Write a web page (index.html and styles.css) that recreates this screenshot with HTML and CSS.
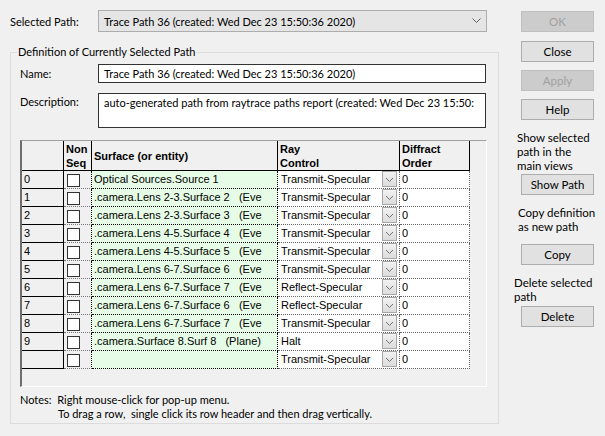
FILE: index.html
```html
<!DOCTYPE html>
<html>
<head>
<meta charset="utf-8">
<link rel="stylesheet" href="styles.css">
</head>
<body>
<div class="dialog">
  <div class="main">
    <div class="sel-row">
      <span class="sel-lbl">Selected Path:</span>
      <div class="combo">
        <span>Trace Path 36 (created: Wed Dec 23 15:50:36 2020)</span>
        <svg class="chev" width="9" height="6" viewBox="0 0 9 6"><polyline points="0.5,0.5 4.5,4.5 8.5,0.5" fill="none" stroke="#606060" stroke-width="1"/></svg>
      </div>
    </div>
    <fieldset class="group">
      <legend>Definition of Currently Selected Path</legend>
      <div class="field-row name-row">
        <span class="lbl">Name:</span>
        <div class="edit name-edit">Trace Path 36 (created: Wed Dec 23 15:50:36 2020)</div>
      </div>
      <div class="field-row desc-row">
        <span class="lbl">Description:</span>
        <div class="edit desc-edit">auto-generated path from raytrace paths report (created: Wed Dec 23 15:50:</div>
      </div>
      <div class="grid-wrap">
        <div class="grid">
          <div class="hc hc-rh"></div>
          <div class="hc">Non<br>Seq</div>
          <div class="hc">Surface (or entity)</div>
          <div class="hc">Ray<br>Control</div>
          <div class="hc">Diffract<br>Order</div>

          <div class="rh">0</div><div class="ns"><span class="cb"></span></div><div class="sf">Optical Sources.Source 1</div><div class="rc"><span>Transmit-Specular</span><span class="dd"><svg width="9" height="6" viewBox="0 0 9 6"><polyline points="1,1 4.5,4.5 8,1" fill="none" stroke="#707070"/></svg></span></div><div class="df">0</div>
          <div class="rh">1</div><div class="ns"><span class="cb"></span></div><div class="sf">.camera.Lens 2-3.Surface 2&nbsp;&nbsp; (Eve</div><div class="rc"><span>Transmit-Specular</span><span class="dd"><svg width="9" height="6" viewBox="0 0 9 6"><polyline points="1,1 4.5,4.5 8,1" fill="none" stroke="#707070"/></svg></span></div><div class="df">0</div>
          <div class="rh">2</div><div class="ns"><span class="cb"></span></div><div class="sf">.camera.Lens 2-3.Surface 3&nbsp;&nbsp; (Eve</div><div class="rc"><span>Transmit-Specular</span><span class="dd"><svg width="9" height="6" viewBox="0 0 9 6"><polyline points="1,1 4.5,4.5 8,1" fill="none" stroke="#707070"/></svg></span></div><div class="df">0</div>
          <div class="rh">3</div><div class="ns"><span class="cb"></span></div><div class="sf">.camera.Lens 4-5.Surface 4&nbsp;&nbsp; (Eve</div><div class="rc"><span>Transmit-Specular</span><span class="dd"><svg width="9" height="6" viewBox="0 0 9 6"><polyline points="1,1 4.5,4.5 8,1" fill="none" stroke="#707070"/></svg></span></div><div class="df">0</div>
          <div class="rh">4</div><div class="ns"><span class="cb"></span></div><div class="sf">.camera.Lens 4-5.Surface 5&nbsp;&nbsp; (Eve</div><div class="rc"><span>Transmit-Specular</span><span class="dd"><svg width="9" height="6" viewBox="0 0 9 6"><polyline points="1,1 4.5,4.5 8,1" fill="none" stroke="#707070"/></svg></span></div><div class="df">0</div>
          <div class="rh">5</div><div class="ns"><span class="cb"></span></div><div class="sf">.camera.Lens 6-7.Surface 6&nbsp;&nbsp; (Eve</div><div class="rc"><span>Transmit-Specular</span><span class="dd"><svg width="9" height="6" viewBox="0 0 9 6"><polyline points="1,1 4.5,4.5 8,1" fill="none" stroke="#707070"/></svg></span></div><div class="df">0</div>
          <div class="rh">6</div><div class="ns"><span class="cb"></span></div><div class="sf">.camera.Lens 6-7.Surface 7&nbsp;&nbsp; (Eve</div><div class="rc"><span>Reflect-Specular</span><span class="dd"><svg width="9" height="6" viewBox="0 0 9 6"><polyline points="1,1 4.5,4.5 8,1" fill="none" stroke="#707070"/></svg></span></div><div class="df">0</div>
          <div class="rh">7</div><div class="ns"><span class="cb"></span></div><div class="sf">.camera.Lens 6-7.Surface 6&nbsp;&nbsp; (Eve</div><div class="rc"><span>Reflect-Specular</span><span class="dd"><svg width="9" height="6" viewBox="0 0 9 6"><polyline points="1,1 4.5,4.5 8,1" fill="none" stroke="#707070"/></svg></span></div><div class="df">0</div>
          <div class="rh">8</div><div class="ns"><span class="cb"></span></div><div class="sf">.camera.Lens 6-7.Surface 7&nbsp;&nbsp; (Eve</div><div class="rc"><span>Transmit-Specular</span><span class="dd"><svg width="9" height="6" viewBox="0 0 9 6"><polyline points="1,1 4.5,4.5 8,1" fill="none" stroke="#707070"/></svg></span></div><div class="df">0</div>
          <div class="rh">9</div><div class="ns"><span class="cb"></span></div><div class="sf">.camera.Surface 8.Surf 8&nbsp;&nbsp; (Plane)</div><div class="rc"><span>Halt</span><span class="dd"><svg width="9" height="6" viewBox="0 0 9 6"><polyline points="1,1 4.5,4.5 8,1" fill="none" stroke="#707070"/></svg></span></div><div class="df">0</div>
          <div class="rh"></div><div class="ns"><span class="cb"></span></div><div class="sf"></div><div class="rc"><span>Transmit-Specular</span><span class="dd"><svg width="9" height="6" viewBox="0 0 9 6"><polyline points="1,1 4.5,4.5 8,1" fill="none" stroke="#707070"/></svg></span></div><div class="df">0</div>
        </div>
      </div>
      <div class="notes">
        <div>Notes:&nbsp; Right mouse-click for pop-up menu.</div>
        <div class="indent">To drag a row,&nbsp; single click its row header and then drag vertically.</div>
      </div>
    </fieldset>
  </div>
  <div class="side">
    <div class="btn disabled b-ok">OK</div>
    <div class="btn b-close">Close</div>
    <div class="btn disabled b-apply">Apply</div>
    <div class="btn b-help">Help</div>
    <div class="stext t-show">Show selected<br>path in the<br>main views</div>
    <div class="btn b-show">Show Path</div>
    <div class="stext t-copy">Copy definition<br>as new path</div>
    <div class="btn b-copy">Copy</div>
    <div class="stext t-del">Delete selected<br>path</div>
    <div class="btn b-del">Delete</div>
  </div>
</div>
</body>
</html>
```

FILE: styles.css
```css
html, body {
  margin: 0;
  padding: 0;
  background: #f0f0f0;
}
body {
  font-family: "Lato", "Noto Sans", sans-serif;
  font-size: 11px;
  color: #000;
  width: 605px;
  height: 436px;
  overflow: hidden;
}
.dialog {
  display: flex;
  width: 605px;
  height: 436px;
}
.main {
  width: 489px;
  padding-left: 10px;
  padding-top: 10px;
}
.sel-row {
  display: flex;
  align-items: center;
  height: 22px;
}
.sel-lbl {
  width: 88px;
}
.combo {
  box-sizing: border-box;
  width: 389px;
  height: 22px;
  border: 1px solid #adadad;
  background: #e5e5e5;
  display: flex;
  align-items: center;
  justify-content: space-between;
  padding: 0 5px 0 5px;
}
.chev {
  display: block;
}
.group {
  box-sizing: border-box;
  margin: 12px 0 0 0;
  width: 489px;
  height: 380px;
  border: 1px solid #dcdcdc;
  padding: 0 0 0 9px;
  min-width: 0;
}
.group legend {
  padding: 0 1px;
  margin-left: -3px;
  line-height: 16px;
}
.field-row {
  display: flex;
}
.lbl {
  width: 78px;
  line-height: 16px;
}
.name-row {
  margin-top: 4px;
  align-items: center;
}
.edit {
  box-sizing: border-box;
  width: 388px;
  background: #fff;
  border: 1px solid #333;
  padding: 0 5px;
  line-height: 16px;
  white-space: nowrap;
  overflow: hidden;
}
.name-edit {
  height: 19px;
  padding-top: 1px;
}
.desc-row {
  margin-top: 10px;
}
.desc-row .lbl {
  padding-top: 1px;
}
.desc-edit {
  height: 35px;
  padding-top: 1px;
}
.grid-wrap {
  box-sizing: border-box;
  margin-top: 12px;
  width: 467px;
  height: 247px;
  border-top: 1px solid #a0a0a0;
  border-left: 2px solid #6e6e6e;
  border-right: 1px solid #fff;
  border-bottom: 1px solid #fff;
}
.grid {
  display: grid;
  grid-template-columns: 42px 28px 186px 122px 70px;
  grid-template-rows: 30px repeat(11, 18px);
  width: 448px;
  font-family: "Liberation Sans", Arial, sans-serif;
  font-size: 11px;
}
.grid > div {
  box-sizing: border-box;
  overflow: hidden;
  white-space: nowrap;
}
.hc {
  font-weight: bold;
  line-height: 14px;
  border-right: 1px solid #000;
  border-bottom: 1px solid #000;
  display: flex;
  align-items: center;
  padding-left: 2px;
  background: #f0f0f0;
}
.rh {
  border-right: 1px solid #000;
  border-bottom: 1px solid #000;
  padding: 1px 0 0 2px;
  line-height: 14px;
}
.ns {
  border-right: 1px dotted #000;
  border-bottom: 1px dotted #777;
  padding: 3px 0 0 3px;
}
.cb {
  display: block;
  box-sizing: border-box;
  width: 13px;
  height: 13px;
  border: 1px solid #333;
  background: #fff;
}
.sf {
  background: #e6fce6;
  border-right: 1px dotted #000;
  border-bottom: 1px dotted #000;
  padding: 1px 0 0 2px;
  line-height: 14px;
}
.rc {
  background: #fff;
  border-right: 1px dotted #666;
  border-bottom: 1px dotted #666;
  padding: 0 2px 0 3px;
  display: flex;
  justify-content: space-between;
  align-items: flex-start;
  line-height: 14px;
}
.rc > span:first-child {
  padding-top: 1px;
}
.dd {
  box-sizing: border-box;
  width: 15px;
  height: 16px;
  border: 1px solid #a6a6a6;
  background: linear-gradient(#f2f2f2, #dcdcdc);
  display: flex;
  align-items: center;
  justify-content: center;
  padding-top: 2px;
}
.dd svg {
  display: block;
}
.df {
  background: #fff;
  border-right: 1px dotted #666;
  border-bottom: 1px dotted #666;
  padding: 1px 0 0 2px;
  line-height: 14px;
}
.notes {
  margin-top: 6px;
  line-height: 14px;
}
.notes .indent {
  padding-left: 38px;
}
.side {
  display: flex;
  flex-direction: column;
  padding-left: 22px;
  width: 73px;
}
.btn {
  box-sizing: border-box;
  width: 73px;
  height: 21px;
  border: 1px solid #adadad;
  background: #e1e1e1;
  text-align: center;
  line-height: 19px;
  font-size: 11.5px;
}
.btn.disabled {
  background: #cccccc;
  border-color: #bfbfbf;
  color: #a0a0a0;
}
.b-ok { margin-top: 11px; }
.b-close { margin-top: 9px; }
.b-apply { margin-top: 8px; }
.b-help { margin-top: 8px; }
.stext {
  line-height: 14px;
  white-space: nowrap;
  font-size: 11.5px;
}
.t-show { margin-top: 11px; margin-left: -4px; }
.b-show { margin-top: 1px; }
.t-copy { margin-top: 11px; margin-left: -3px; }
.b-copy { margin-top: 10px; }
.t-del { margin-top: 11px; margin-left: -7px; }
.b-del { margin-top: 2px; }
```
